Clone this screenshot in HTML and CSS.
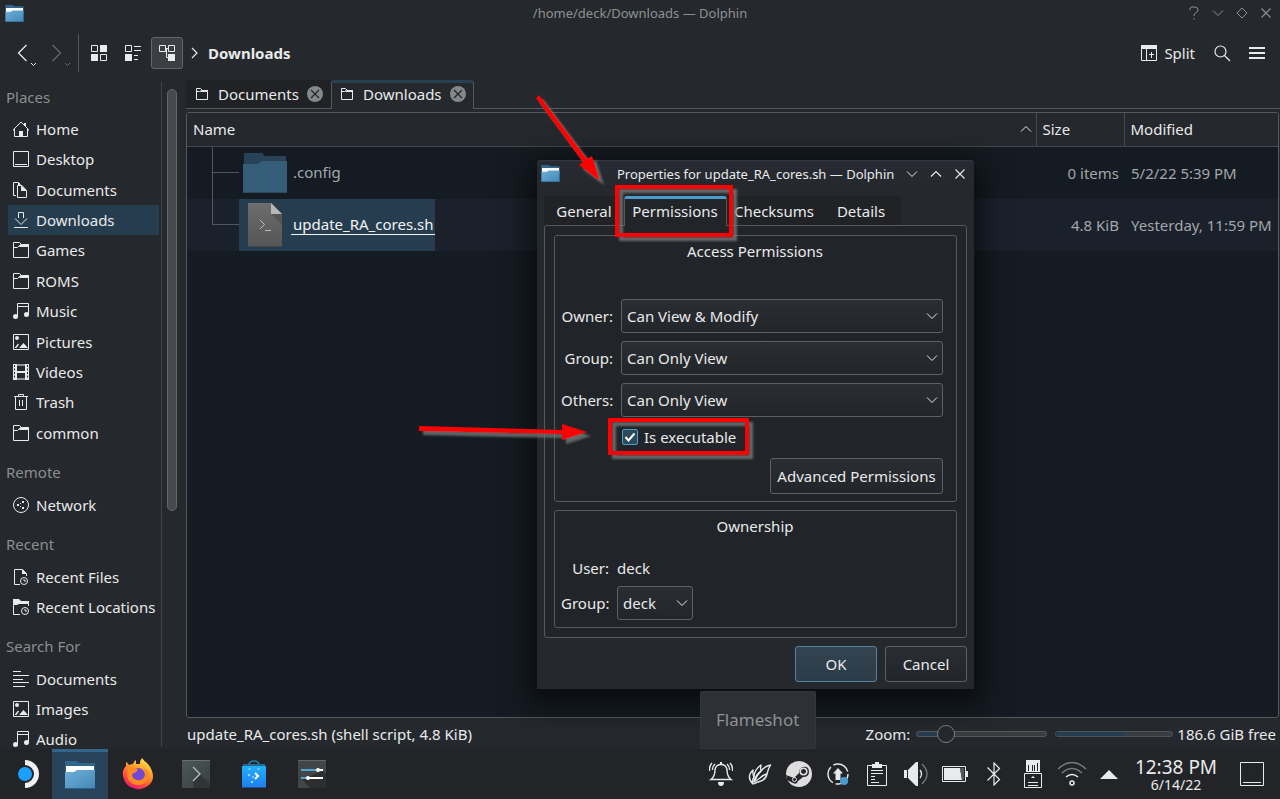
FILE: index.html
```html
<!DOCTYPE html>
<html lang="en">
<head>
<meta charset="utf-8">
<title>/home/deck/Downloads — Dolphin</title>
<link rel="stylesheet" href="styles.css">
</head>
<body>
<svg class="defs" aria-hidden="true">
  <defs>
    <linearGradient id="blueFolder" x1="0" y1="0" x2="1" y2="1"><stop offset="0" stop-color="#6fb0db"/><stop offset="1" stop-color="#4187b5"/></linearGradient>
    <linearGradient id="fox" x1="0.8" y1="0" x2="0.3" y2="1"><stop offset="0" stop-color="#fff04a"/><stop offset=".4" stop-color="#ff9a2a"/><stop offset=".75" stop-color="#ff4a3f"/><stop offset="1" stop-color="#e5157a"/></linearGradient>
    <linearGradient id="bag" x1="0" y1="0" x2="0" y2="1"><stop offset="0" stop-color="#22b0fa"/><stop offset="1" stop-color="#1d7df0"/></linearGradient>
    <linearGradient id="script" x1="0" y1="0" x2="0" y2="1"><stop offset="0" stop-color="#6d6d6d"/><stop offset="1" stop-color="#555"/></linearGradient>
    <linearGradient id="term" x1="0" y1="0" x2="1" y2="1"><stop offset="0" stop-color="#4c5857"/><stop offset="1" stop-color="#3a3f42"/></linearGradient>
    <filter id="drop" x="-20%" y="-20%" width="150%" height="150%"><feDropShadow dx="4" dy="4" stdDeviation="1" flood-color="#777" flood-opacity=".8"/></filter>
  </defs>
  <symbol id="i-home" viewBox="0 0 16 16"><path d="M.5 9.500v-1L8 1l7.500 7.500v1M1.500 8v7.500h13V8" fill="none" stroke="currentColor"/><path d="M6 10h4v6H6zM11 2h2v3h-2z" fill="currentColor"/></symbol>
  <symbol id="i-desktop" viewBox="0 0 16 16"><path d="M.5.5h15v15H.5zM2 13.500h12" fill="none" stroke="currentColor"/></symbol>
  <symbol id="i-docs" viewBox="0 0 16 16"><path d="M3 13.500H.5V.5h5L7 2M4.500 3.500h4.500l4.500 5v7h-9z" fill="none" stroke="currentColor"/><path d="M8 3l6 6H8zM5 0l4 4H5z" fill="currentColor"/></symbol>
  <symbol id="i-down" viewBox="0 0 16 16"><path d="M5.500 6V.5h5V6M2 6.500l6 6 6-6M1 15.500h14" fill="none" stroke="currentColor"/></symbol>
  <symbol id="i-folder" viewBox="0 0 16 16"><path d="M.5 15.500V.5h6l2 2h7v13zM.5 5.500h4l3-3" fill="none" stroke="currentColor"/><path d="M8 2h8v3H6z" fill="currentColor"/></symbol>
  <symbol id="i-folder-s" viewBox="0 0 12 12"><path d="M.5 11.500V.5h4l2 2h5v9zM.5 3.500h3l2-1" fill="none" stroke="currentColor"/><path d="M6 2h6v2H4z" fill="currentColor"/></symbol>
  <symbol id="i-music" viewBox="0 0 16 16"><path d="M4.500 13.500V.5h11v11M5 3.500h10" fill="none" stroke="currentColor"/><circle cx="2.500" cy="13.500" r="2.500" fill="currentColor"/><circle cx="13.500" cy="11.500" r="2.500" fill="currentColor"/></symbol>
  <symbol id="i-image" viewBox="0 0 16 16"><path d="M.5.5h15v15H.5z" fill="none" stroke="currentColor"/><circle cx="4" cy="4" r="2" fill="currentColor"/><path d="M6 14l4.500-5 4.500 5zM1.500 14l3.500-4.500 1 1L3.500 14z" fill="currentColor"/></symbol>
  <symbol id="i-video" viewBox="0 0 16 16"><path d="M0 0h4v16H0zM12 0h4v16h-4zM4 7h8v2H4z" fill="currentColor"/><path d="M4 0h8v2H4zM4 14h8v2H4z" fill="currentColor" opacity=".55"/><path d="M1.500 1v14M14.500 1v14" stroke="#25282c" stroke-dasharray="2 1.500"/></symbol>
  <symbol id="i-trash" viewBox="0 0 16 16"><path d="M1 2.500h14M5.500 2V.5h5V2M2.500 3v12.500h11V3M6.500 6v6M9.500 6v6" fill="none" stroke="currentColor"/></symbol>
  <symbol id="i-net" viewBox="0 0 16 16"><circle cx="8" cy="8" r="7.500" fill="none" stroke="currentColor"/><path d="M4 7h2v2H4zM9 4h2v2H9zM9 10h2v2H9zM7 6h1v1H7zM7 9h1v1H7z" fill="currentColor"/></symbol>
  <symbol id="i-rfile" viewBox="0 0 16 16"><path d="M7 15.500H1.500V.5h8l4 4V7" fill="none" stroke="currentColor"/><path d="M9 0l5 5H9z" fill="currentColor"/><circle cx="11" cy="12" r="3.500" fill="none" stroke="currentColor"/><path d="M11 10v2h2" fill="none" stroke="currentColor"/></symbol>
  <symbol id="i-rloc" viewBox="0 0 16 16"><path d="M7 15.500H.5V4M15.500 7V4" fill="none" stroke="currentColor"/><path d="M0 0h6l2 2h8v3H6L4 6H0z" fill="currentColor"/><circle cx="12" cy="12" r="3.500" fill="none" stroke="currentColor"/><path d="M12 10v2h2" fill="none" stroke="currentColor"/></symbol>
  <symbol id="i-lines" viewBox="0 0 16 16"><path d="M0 .5h8M0 4.500h16M0 8.500h10M0 11.500h16M0 15.500h12" stroke="currentColor"/></symbol>
  <symbol id="i-close" viewBox="0 0 16 16"><circle cx="8" cy="8" r="8" fill="#85878a"/><path d="M4 4l8 8M12 4l-8 8" stroke="#232529" stroke-width="1.200"/></symbol>
  <symbol id="i-chev" viewBox="0 0 12 8"><path d="M1 1.500l5 5 5-5" fill="none" stroke="currentColor"/></symbol>
  <symbol id="i-x" viewBox="0 0 12 12"><path d="M1.500 1.500l9 9M10.500 1.500l-9 9" stroke="currentColor" stroke-width="1.100"/></symbol>
  <symbol id="i-bfolder" viewBox="0 0 30 28"><path d="M0 0h12l3 2h15v12H0z" fill="#30668a"/><path d="M1 5h28v8H1z" fill="#fff"/><path d="M0 11h9l3-2h18v19H0z" fill="url(#blueFolder)"/><path d="M0 27h30v1H0z" fill="#2b6288"/></symbol>
</svg>

<div class="desktop">
  <header class="titlebar">
    <svg class="app-icon" width="19" height="17"><use href="#i-bfolder"/></svg>
    <h1 class="window-title">/home/deck/Downloads — Dolphin</h1>
    <div class="window-buttons">
      <button type="button" aria-label="Help"><svg width="12" height="14" viewBox="0 0 12 14"><path d="M2 4V3q0-2 2-2h3q3 0 3 3 0 2-2.500 3Q6 7.500 6 10M6 12v1.500" fill="none" stroke="currentColor"/></svg></button>
      <button type="button" aria-label="Minimize"><svg width="12" height="8"><use href="#i-chev"/></svg></button>
      <button type="button" aria-label="Maximize"><svg width="12" height="12" viewBox="0 0 12 12"><path d="M6 1l5 5-5 5-5-5z" fill="none" stroke="currentColor"/></svg></button>
      <button type="button" aria-label="Close"><svg width="12" height="12"><use href="#i-x"/></svg></button>
    </div>
  </header>

  <nav class="toolbar" aria-label="Main toolbar">
    <button type="button" class="nav-button" aria-label="Back"><svg width="22" height="24" viewBox="0 0 22 24"><path d="M10.500 2l-8 8 8 8" fill="none" stroke="currentColor" stroke-width="1.300"/><path d="M15 20l2.500 2.500L20 20" fill="none" stroke="currentColor"/></svg></button>
    <button type="button" class="nav-button dim" aria-label="Forward"><svg width="22" height="24" viewBox="0 0 22 24"><path d="M2.500 2l8 8-8 8" fill="none" stroke="currentColor" stroke-width="1.300"/><path d="M15 20l2.500 2.500L20 20" fill="none" stroke="currentColor"/></svg></button>
    <span class="separator"></span>
    <button type="button" class="tool" aria-label="Icons"><svg width="16" height="16" viewBox="0 0 16 16"><path d="M.5.5h6v6h-6zM9.500 9.500h6v6h-6z" fill="none" stroke="currentColor"/><path d="M9 0h7v7H9zM0 9h7v7H0z" fill="currentColor"/></svg></button>
    <button type="button" class="tool" aria-label="Compact"><svg width="16" height="16" viewBox="0 0 16 16"><path d="M.5.5h6v6h-6zM9 1.500h7M9 5.500h7M9 10.500h4M9 14.500h4" fill="none" stroke="currentColor"/><path d="M0 9h7v7H0z" fill="currentColor"/></svg></button>
    <button type="button" class="tool checked" aria-label="Details"><svg width="16" height="16" viewBox="0 0 16 16"><path d="M.5.5h6v6h-6zM9.500.5h6v6h-6zM6.500 3.500h3M7.500 4v8.500H10" fill="none" stroke="currentColor"/><path d="M9 9h7v7H9z" fill="currentColor"/></svg></button>
    <svg class="crumb-arrow" width="8" height="12" viewBox="0 0 8 12"><path d="M1 1l5 5-5 5" fill="none" stroke="currentColor" stroke-width="1.200"/></svg>
    <strong class="crumb">Downloads</strong>
    <div class="toolbar-right">
      <button type="button" class="split"><svg width="16" height="16" viewBox="0 0 16 16"><path d="M.5.5h15v15H.5zM5.500 3v13M10.500 7v6M8 9.500h5" fill="none" stroke="currentColor"/><path d="M0 0h16v4H0z" fill="currentColor"/></svg>Split</button>
      <button type="button" aria-label="Search"><svg width="18" height="18" viewBox="0 0 18 18"><circle cx="7.500" cy="7.500" r="5.500" fill="none" stroke="currentColor" stroke-width="1.200"/><path d="M11.500 11.500L17 17" stroke="currentColor" stroke-width="1.200"/></svg></button>
      <button type="button" aria-label="Menu"><svg width="16" height="12" viewBox="0 0 16 12"><path d="M0 0h16v2H0zM0 5h16v2H0zM0 10h16v2H0z" fill="currentColor"/></svg></button>
    </div>
  </nav>

  <div class="workspace">
    <aside class="places">
      <h2>Places</h2>
      <ul class="places-main">
        <li><a href="#"><svg><use href="#i-home"/></svg>Home</a></li>
        <li><a href="#"><svg><use href="#i-desktop"/></svg>Desktop</a></li>
        <li><a href="#"><svg><use href="#i-docs"/></svg>Documents</a></li>
        <li><a href="#" class="current"><svg><use href="#i-down"/></svg>Downloads</a></li>
        <li><a href="#"><svg><use href="#i-folder"/></svg>Games</a></li>
        <li><a href="#"><svg><use href="#i-folder"/></svg>ROMS</a></li>
        <li><a href="#"><svg><use href="#i-music"/></svg>Music</a></li>
        <li><a href="#"><svg><use href="#i-image"/></svg>Pictures</a></li>
        <li><a href="#"><svg><use href="#i-video"/></svg>Videos</a></li>
        <li><a href="#"><svg><use href="#i-trash"/></svg>Trash</a></li>
        <li><a href="#"><svg><use href="#i-folder"/></svg>common</a></li>
      </ul>
      <h2>Remote</h2>
      <ul><li><a href="#"><svg><use href="#i-net"/></svg>Network</a></li></ul>
      <h2>Recent</h2>
      <ul>
        <li><a href="#"><svg><use href="#i-rfile"/></svg>Recent Files</a></li>
        <li><a href="#"><svg><use href="#i-rloc"/></svg>Recent Locations</a></li>
      </ul>
      <h2>Search For</h2>
      <ul>
        <li><a href="#"><svg><use href="#i-lines"/></svg>Documents</a></li>
        <li><a href="#"><svg><use href="#i-image"/></svg>Images</a></li>
        <li><a href="#"><svg><use href="#i-music"/></svg>Audio</a></li>
      </ul>
    </aside>
    <div class="scroll-track"><div class="scroll-thumb"></div></div>

    <main class="content">
      <div class="tabs">
        <div class="tab"><svg width="12" height="12"><use href="#i-folder-s"/></svg><span>Documents</span><button type="button" aria-label="Close Documents"><svg width="16" height="16"><use href="#i-close"/></svg></button></div>
        <div class="tab active"><svg width="12" height="12"><use href="#i-folder-s"/></svg><span>Downloads</span><button type="button" aria-label="Close Downloads"><svg width="16" height="16"><use href="#i-close"/></svg></button></div>
      </div>
      <div class="view">
        <table class="files">
          <thead>
            <tr><th><div class="sort">Name<svg width="12" height="8" viewBox="0 0 12 8"><path d="M1 6.500l5-5 5 5" fill="none" stroke="currentColor"/></svg></div></th><th class="size">Size</th><th class="modified">Modified</th></tr>
          </thead>
          <tbody>
            <tr>
              <td><div class="entry"><svg class="branch" width="52" height="52" viewBox="0 0 52 52"><path d="M25.500 0v52M26 25.500h26" stroke="#53575b"/></svg><div class="file"><svg width="44" height="40" viewBox="0 0 44 40"><path d="M1 0h18l3 3h21v10H1z" fill="#284358"/><path d="M0 11h15l4-3h25v32H0z" fill="#365d78"/><path d="M0 39h44v1H0z" fill="#2b4a60"/></svg><span>.config</span></div></div></td>
              <td class="size">0 items</td><td>5/2/22 5:39 PM</td>
            </tr>
            <tr class="alt">
              <td><div class="entry"><svg class="branch" width="52" height="52" viewBox="0 0 52 52"><path d="M25.500 0v26M25 25.500h27" fill="none" stroke="#53575b"/></svg><div class="file selected"><svg width="44" height="44" viewBox="0 0 44 44"><path d="M5 0h23l11 11v33H5z" fill="url(#script)"/><path d="M28 11h11v11z" fill="#555"/><path d="M28 0l11 11H28z" fill="#b7b7b7"/><path d="M5 43h34v1H5z" fill="#444"/><path d="M17 17l4.500 4.500L17 26M22 27.500h6" fill="none" stroke="#bbb"/></svg><span>update_RA_cores.sh</span></div></div></td>
              <td class="size">4.8 KiB</td><td>Yesterday, 11:59 PM</td>
            </tr>
          </tbody>
        </table>
      </div>
      <footer class="status">
        <span>update_RA_cores.sh (shell script, 4.8 KiB)</span>
        <label class="zoom-label" for="zoom">Zoom:</label>
        <input id="zoom" class="zoom" type="range" min="0" max="100" value="18">
        <div class="capacity"><div class="used" style="width:59%"></div></div>
        <span>186.6 GiB free</span>
      </footer>
    </main>
  </div>

  <footer class="taskbar">
    <button type="button" class="launcher" aria-label="Launcher"><svg width="24" height="28" viewBox="0 0 24 28"><path d="M8 0a14 14 0 0 1 0 28v-5a9 9 0 0 0 0-18z" fill="#f1f1f2"/><circle cx="8" cy="14" r="7" fill="#1a9fff"/></svg></button>
    <div class="tasks">
      <button type="button" class="task running" aria-label="Dolphin"><svg width="30" height="28"><use href="#i-bfolder"/></svg></button>
      <button type="button" class="task" aria-label="Firefox"><svg width="32" height="32" viewBox="0 0 32 32"><path d="M20 0q2 3 5 5 4 4 5 8 3 9-3 14-6 5-13 4Q3 29 1 18 0 12 4 8V4q2 1 3 3 2-1 4-1 1-3 3-4v4h4q0-4 2-6z" fill="url(#fox)"/><circle cx="16" cy="17" r="7" fill="#7447d4"/><path d="M6 10q3-2 6 0l4 1q-1 3-4 4l-2 1q0 5 5 6 6 1 8-4 1-5-3-9 7 3 7 9-1 8-10 9Q7 27 5 18z" fill="#ff8a20"/></svg></button>
      <button type="button" class="task" aria-label="Konsole"><svg width="28" height="28" viewBox="0 0 28 28"><path d="M0 0h28v28H0z" fill="url(#term)"/><path d="M18 14l10 10v4H12l-1-7z" fill="#303436"/><path d="M0 .5h28" stroke="#66716e"/><path d="M11 7l7 7-7 7" fill="none" stroke="#b9c1bd" stroke-width="1.300"/></svg></button>
      <button type="button" class="task" aria-label="Discover"><svg width="26" height="28" viewBox="0 0 26 28"><path d="M8 8V5q0-4 5-4t5 4v3" fill="none" stroke="#247eae" stroke-width="1.500"/><path d="M2 4h22v4H2z" fill="#226a91"/><path d="M1 6h24v21.500H1z" fill="url(#bag)"/><path d="M14 13l3 3-3 3" fill="none" stroke="#fff" stroke-width="2"/><g fill="#8fd4ff"><circle cx="8" cy="15" r="1.300"/><circle cx="11" cy="22" r="1.300"/><circle cx="8.500" cy="9" r="1"/><circle cx="17.500" cy="9" r="1"/><circle cx="12" cy="17" r="1"/></g></svg></button>
      <button type="button" class="task" aria-label="System Settings"><svg width="28" height="28" viewBox="0 0 28 28"><path d="M0 0h28v28H0z" fill="#434547"/><path d="M4 19l21-8 3 3v14H12z" fill="#2c2e30"/><path d="M0 .5h28" stroke="#626466"/><path d="M3 10h17M3 18h7" stroke="#53a5d7" stroke-width="2"/><path d="M20 10h5M10 18h15" stroke="#fff" stroke-width="2"/><circle cx="20" cy="10" r="2" fill="#fff"/><circle cx="10" cy="18" r="2" fill="#fff"/></svg></button>
    </div>
    <div class="tray">
      <button type="button" aria-label="Notifications"><svg width="24" height="24" viewBox="0 0 24 24"><path d="M2 17.500q4-3 4-10Q7 2.500 12 2.500t6 5q0 7 4 10z" fill="none" stroke="currentColor" stroke-width="1.400"/><path d="M9 20h6q0 4-3 4t-3-4zM11 0h2v3h-2z" fill="currentColor"/><path d="M3 1Q0 4 .5 9M6 2Q3 5 3.500 8M21 1q3 3 2.500 8M18 2q3 3 2.500 6" fill="none" stroke="currentColor" stroke-width="1.300"/></svg></button>
      <button type="button" aria-label="Flameshot"><svg width="24" height="24" viewBox="0 0 24 24"><g fill="none" stroke="currentColor" stroke-width="1.400" stroke-linejoin="round"><path d="M5 22Q0 17 2 12q1-2 3-4-.5 4 1 7Q4 18 5 22z"/><path d="M6 15q0-7 7-12-1 4 0 6-4 4-7 11"/><path d="M13 9q4-5 9.500-6Q20 7 19 12q-4 1-7 4l-6 4q1-7 7-11z"/><path d="M19 12q-1 5-6 7-4 1-7.500 3"/></g></svg></button>
      <button type="button" aria-label="Steam"><svg width="26" height="26" viewBox="0 0 26 26"><circle cx="13" cy="13" r="13" fill="#dedede"/><path d="M0 14l8 3 5-5q0-5 4-6 6-1 6 5 0 5-6 5l-5 4q-1 4-5 2l-6-3z" fill="#25272a"/><circle cx="17.500" cy="10.500" r="3.300" fill="none" stroke="#dedede" stroke-width="1.600"/><circle cx="8.500" cy="18.500" r="2" fill="none" stroke="#dedede"/></svg></button>
      <button type="button" aria-label="Updates"><svg width="24" height="24" viewBox="0 0 24 24"><circle cx="12" cy="12" r="10" fill="none" stroke="currentColor" stroke-width="1.400" stroke-dasharray="18 3"/><path d="M12 6l5 5.500h-2.500V18h-5v-6.500H7z" fill="currentColor"/><circle cx="18" cy="19" r="4" fill="#4a9bd0"/></svg></button>
      <button type="button" aria-label="Clipboard"><svg width="20" height="24" viewBox="0 0 20 24"><path d="M.5 3.500h19v20H.5zM4 8.500h12M4 11.500h12M4 14.500h4M4 17.500h4M4 20.500h8" fill="none" stroke="currentColor"/><path d="M5 2h3V0h4v2h3v4H5z" fill="currentColor"/></svg></button>
      <button type="button" aria-label="Volume"><svg width="24" height="24" viewBox="0 0 24 24"><path d="M0 8h3v8H0zM4 8l8-8h2v24h-2l-8-8z" fill="currentColor"/><path d="M16 8q3 4 0 8" fill="none" stroke="currentColor" stroke-width="1.300"/><path d="M18 2q10 10 0 20" fill="none" stroke="#77797b" stroke-width="1.300"/></svg></button>
      <button type="button" aria-label="Battery"><svg width="26" height="16" viewBox="0 0 26 16"><path d="M.5.5h23v15H.5z" fill="none" stroke="currentColor"/><path d="M2 2h16l2 12H2zM24 5h2v6h-2z" fill="currentColor"/><path d="M18 2h4v12h-2z" fill="#55585a"/></svg></button>
      <button type="button" aria-label="Bluetooth"><svg width="14" height="24" viewBox="0 0 14 24"><path d="M.5 5.500l12 12L7 23V1l5.500 5.500-12 12" fill="none" stroke="currentColor" stroke-width="1.200"/></svg></button>
      <button type="button" aria-label="Removable devices"><svg width="18" height="28" viewBox="0 0 18 28"><path d="M2 0h14v12H2z" fill="currentColor"/><path d="M4.500 5v6M8.500 5v6M10.500 5v6M13.500 3v8" stroke="#232428"/><path d="M.5 13.500h17v14H.5zM4 22.500h10M4 25.500h10" fill="none" stroke="currentColor"/><path d="M9 16l2 2H7z" fill="currentColor"/></svg></button>
      <button type="button" aria-label="Network"><svg width="30" height="26" viewBox="0 0 30 26"><g fill="none" stroke-width="1.500"><path d="M1 8q14-13 28 0M5 12q10-9 20 0" stroke="#77797b"/><path d="M9 16q6-5 12 0" stroke="currentColor"/><circle cx="15" cy="22" r="2" stroke="currentColor"/></g></svg></button>
      <button type="button" class="more" aria-label="Show hidden icons"><svg width="18" height="9" viewBox="0 0 18 9"><path d="M9 0l9 9H0z" fill="currentColor"/></svg></button>
      <div class="clock"><time class="time">12:38 PM</time><time class="date">6/14/22</time></div>
      <button type="button" class="peek" aria-label="Show desktop"><svg width="24" height="24" viewBox="0 0 24 24"><path d="M.5.5h23v23H.5zM3 20.500h18" fill="none" stroke="currentColor"/></svg></button>
    </div>
  </footer>

  <section class="dialog" role="dialog" aria-labelledby="dialog-title">
    <header class="dialog-title">
      <svg class="app-icon" width="19" height="17"><use href="#i-bfolder"/></svg>
      <h2 id="dialog-title">Properties for update_RA_cores.sh — Dolphin</h2>
      <div class="window-buttons">
        <button type="button" aria-label="Minimize dialog"><svg width="12" height="8"><use href="#i-chev"/></svg></button>
        <button type="button" aria-label="Maximize dialog"><svg width="12" height="8" viewBox="0 0 12 8"><path d="M1 6.500l5-5 5 5" fill="none" stroke="currentColor" stroke-width="1.200"/></svg></button>
        <button type="button" aria-label="Close dialog"><svg width="12" height="12"><use href="#i-x"/></svg></button>
      </div>
    </header>
    <div class="dialog-tabs" role="tablist">
      <button type="button" role="tab">General</button>
      <button type="button" role="tab" class="active" aria-selected="true">Permissions</button>
      <button type="button" role="tab">Checksums</button>
      <button type="button" role="tab">Details</button>
    </div>
    <div class="page">
      <fieldset class="group access">
        <h3>Access Permissions</h3>
        <div class="form">
          <label for="owner">Owner:</label>
          <div class="combo"><select id="owner"><option>Can View &amp; Modify</option></select><svg width="12" height="8"><use href="#i-chev"/></svg></div>
          <label for="group">Group:</label>
          <div class="combo"><select id="group"><option>Can Only View</option></select><svg width="12" height="8"><use href="#i-chev"/></svg></div>
          <label for="others">Others:</label>
          <div class="combo"><select id="others"><option>Can Only View</option></select><svg width="12" height="8"><use href="#i-chev"/></svg></div>
        </div>
        <div class="check">
          <span class="box"><input id="exec" type="checkbox" checked><svg width="16" height="16" viewBox="0 0 16 16"><path d="M3.500 8l3 3.500 6-7" fill="none" stroke="#fff" stroke-width="2"/></svg></span>
          <label for="exec">Is executable</label>
        </div>
        <button type="button" class="btn advanced">Advanced Permissions</button>
      </fieldset>
      <fieldset class="group ownership">
        <h3>Ownership</h3>
        <div class="owner-form">
          <span class="name">User:</span><span>deck</span>
          <label class="name" for="ugroup">Group:</label>
          <div class="combo small"><select id="ugroup"><option>deck</option></select><svg width="12" height="8"><use href="#i-chev"/></svg></div>
        </div>
      </fieldset>
    </div>
    <div class="actions"><button type="button" class="btn primary">OK</button><button type="button" class="btn">Cancel</button></div>
  </section>

  <div class="tooltip" role="tooltip">Flameshot</div>

  <svg class="marks" width="1280" height="799" viewBox="0 0 1280 799" aria-hidden="true">
    <g filter="url(#drop)"><path d="M617 187h114v48H617z" fill="none" stroke="#f00" stroke-width="4"/></g>
    <g filter="url(#drop)"><path d="M610 420h137v33H610z" fill="none" stroke="#f00" stroke-width="4"/></g>
    <g filter="url(#drop)" fill="#f00"><path d="M536 98l3-3 48 64 5-3 8 25-21-16 4-3z"/></g>
    <g filter="url(#drop)" fill="#f00"><path d="M419 426l143 4v-6l25 8-25 8v-6l-143-3z"/></g>
  </svg>
</div>
</body>
</html>
```
FILE: styles.css
```css
* { box-sizing: border-box; }

body {
  margin: 0;
  background: #25282c;
  color: #e9eaeb;
  font: 15px/20px "Noto Sans", sans-serif;
}

h1, h2, h3, ul, fieldset { margin: 0; padding: 0; border: 0; font-weight: 400; }
svg { display: block; flex: none; }
button, select { font: inherit; color: inherit; }
button { padding: 0; border: 0; background: none; }

.defs { position: absolute; width: 0; height: 0; }

.desktop {
  position: relative;
  display: flex;
  flex-direction: column;
  height: 100vh;
  overflow: hidden;
}

/* Window title bar and toolbar */
.titlebar {
  display: grid;
  grid-template-columns: 1fr auto 1fr;
  align-items: center;
  height: 27px;
  padding: 0 5px 1px;
  color: #8d9193;
}
.window-title { font-size: 13px; }
.window-buttons { display: flex; justify-content: flex-end; gap: 12px; margin-right: 3px; }
.window-buttons button { display: grid; place-items: center; width: 12px; height: 16px; }

.toolbar {
  display: flex;
  align-items: center;
  height: 53px;
  padding: 0 15px 2px 16px;
}
.nav-button { width: 34px; height: 28px; padding-top: 4px; }
.nav-button.dim { width: 28px; color: #66696c; }
.separator { width: 1px; height: 38px; margin-right: 4px; background: #55585b; }
.tool { display: grid; place-items: center; width: 32px; height: 32px; margin-right: 2px; }
.tool.checked { border: 1px solid #63676a; border-radius: 3px; background: #3b3f43; }
.crumb-arrow { margin: 0 9px 0 6px; }
.crumb { font-weight: 700; }
.toolbar-right { display: flex; align-items: center; gap: 18px; margin-left: auto; }
.split { display: flex; align-items: center; gap: 7px; }

.workspace { display: flex; flex: 1; min-height: 0; }

/* Places panel */
.places {
  width: 162px;
  margin: 2px 0;
  overflow: hidden;
  border-right: 1px solid #404347;
}
.places h2 {
  height: 32px;
  padding: 5px 6px;
  color: #8b8e91;
  font-size: 15px;
}
.places ul + h2 { height: 33px; margin-top: 9px; }
.places ul { display: grid; grid-auto-rows: 30px; padding: 0 2px 0 8px; list-style: none; }
.places .places-main { height: 334px; grid-auto-rows: 1fr; }
.places a {
  display: flex;
  align-items: center;
  gap: 7px;
  height: 30px;
  padding-left: 5px;
  color: inherit;
  text-decoration: none;
  white-space: nowrap;
}
.places a svg { width: 16px; height: 16px; }
.places a.current { background: #263d4f; }
.scroll-track { width: 24px; padding: 9px 9px 0 5px; }
.scroll-thumb { height: 422px; border: 1px solid #65686b; border-radius: 5px; background: #48494d; }

/* Folder view */
.content { display: flex; flex: 1; flex-direction: column; min-width: 0; }
.tabs { display: flex; height: 29px; }
.tabs::after { content: ""; flex: 1; border-bottom: 1px solid #55595c; }
.tab {
  display: flex;
  align-items: center;
  width: 145px;
  padding: 0 8px 1px 10px;
  border-bottom: 1px solid #55595c;
  background: #202226;
}
.tab span { margin-left: 10px; }
.tab button { margin-left: auto; }
.tab.active {
  width: 143px;
  padding: 0 7px 4px 9px;
  border: 1px solid #55595c;
  border-top: 3px solid #294052;
  border-bottom: 0;
  border-radius: 3px 3px 0 0;
  background: #25282c;
}
.view {
  flex: 1;
  margin: 3px 1px 0 0;
  overflow: hidden;
  border: 1px solid #55595c;
  border-radius: 3px;
  background: #151b22;
}
.files { width: 100%; border-collapse: collapse; table-layout: fixed; color: #a3a6a9; }
.files th {
  height: 33px;
  padding: 0 6px;
  border-bottom: 1px solid #46494d;
  border-left: 1px solid #46494d;
  background: #25282c;
  color: #e9eaeb;
  font-weight: 400;
  text-align: left;
}
.files th:first-child { padding-right: 4px; border-left: 0; }
.files th.size { width: 88px; }
.files th.modified { width: 154px; }
.files td { height: 52px; padding: 0 5px 0 7px; white-space: nowrap; }
.files td:first-child { padding: 0; }
.files td.size { text-align: right; }
.files .alt { background: #1a212b; }
.sort { display: flex; align-items: center; justify-content: space-between; }
.entry { display: flex; height: 52px; }
.file { display: flex; align-items: center; gap: 4px; padding-left: 4px; }
.file span { padding: 0 1px 0 2px; border-bottom: 1px solid transparent; }
.file.selected { background: #263d4f; color: #f2f3f3; }
.file.selected span { border-color: #f2f3f3; }

.status { display: flex; align-items: center; height: 31px; padding: 1px 4px 0 1px; }
.zoom-label { margin-left: auto; }
.zoom { width: 131px; height: 20px; margin: 0 8px 0 6px; appearance: none; background: none; }
.zoom::-webkit-slider-runnable-track {
  height: 6px;
  border: 1px solid #55595c;
  border-radius: 3px;
  background: linear-gradient(90deg, #263d4f 18%, #393c3f 18%);
}
.zoom::-webkit-slider-thumb {
  width: 18px;
  height: 18px;
  margin-top: -7px;
  appearance: none;
  border: 1px solid #7b7e80;
  border-radius: 50%;
  background: #25282c;
}
.capacity { width: 118px; height: 6px; margin-right: 4px; border: 1px solid #4a5359; border-radius: 3px; background: #3a3d40; }
.used { height: 100%; background: #263d4f; }

/* Bottom panel */
.taskbar { display: flex; justify-content: space-between; height: 50px; background: #232428; }
.launcher { display: grid; place-items: center; width: 52px; padding-left: 6px; }
.tasks { display: flex; gap: 2px; margin-right: auto; }
.task { display: grid; place-items: center; width: 56px; }
.task.running { padding-bottom: 2px; border-top: 3px solid #32658a; background: #29445a; }
.tray { display: flex; align-items: center; padding-right: 2px; }
.tray button { display: grid; place-items: center; width: 39px; height: 50px; }
.tray .more { width: 35px; }
.tray .peek { width: 52px; }
.clock { display: flex; flex-direction: column; align-items: center; width: 100px; padding-top: 1px; }
.time { font-size: 19px; line-height: 20px; }
.date { font-size: 14px; line-height: 16px; }

/* Properties dialog */
.dialog {
  position: absolute;
  top: 160px;
  left: 537px;
  width: 437px;
  padding: 0 7px 7px;
  border-top: 1px solid #34373b;
  border-radius: 3px 3px 0 0;
  background: #25282c;
  box-shadow: 0 8px 30px 8px rgba(0, 0, 0, .55);
}
.dialog-title {
  display: grid;
  grid-template-columns: 73px auto 1fr;
  align-items: center;
  height: 27px;
  margin: 0 -7px;
  padding: 0 5px 2px 4px;
  border-radius: 3px 3px 0 0;
  background: linear-gradient(#282a34, #25282c);
}
.dialog-title h2 { padding-left: 3px; font-size: 13px; white-space: nowrap; }
.dialog-tabs { display: flex; margin-top: 8px; }
.dialog-tabs button { height: 29px; padding-top: 1px; width: 80px; background: #202226; }
.dialog-tabs button:nth-child(3) { width: 94px; }
.dialog-tabs .active {
  width: 103px;
  height: 30px;
  margin-bottom: -1px;
  padding: 0 1px 4px 0;
  border: 1px solid #55595c;
  border-top: 3px solid #4c9bce;
  border-bottom: 0;
  border-radius: 3px 3px 0 0;
  background: #212428;
  z-index: 1;
}
.page { padding: 9px; border: 1px solid #55595c; border-radius: 3px; background: #212428; }
.group { min-width: 0; padding: 5px 13px 7px 6px; border: 1px solid #55595c; border-radius: 3px; }
.group h3 { margin-right: -6px; font-size: 15px; text-align: center; }
.ownership { margin-top: 8px; }
.form {
  display: grid;
  grid-template-columns: 52px 1fr;
  gap: 8px;
  align-items: center;
  margin-top: 38px;
}
.form label { text-align: right; }
.combo { display: grid; align-items: center; }
.combo select, .combo svg { grid-area: 1 / 1; }
.combo svg { justify-self: end; margin-right: 5px; pointer-events: none; }
.combo select {
  width: 100%;
  height: 34px;
  padding: 0 5px;
  appearance: none;
  border: 1px solid #5d6164;
  border-radius: 3px;
  background: linear-gradient(#2a2d31, #222529);
}
.check { display: flex; align-items: center; gap: 6px; height: 40px; padding-left: 61px; }
.box { display: grid; }
.box input, .box svg { grid-area: 1 / 1; }
.box svg { pointer-events: none; }
.box input { width: 16px; height: 16px; margin: 0; appearance: none; border: 1px solid #4c9bce; border-radius: 2px; background: #2d4a5d; }
.btn {
  width: 82px;
  height: 36px;
  border: 1px solid #5d6164;
  border-radius: 3px;
  background: linear-gradient(#2a2d31, #222529);
}
.btn.primary { border-color: #55829e; background: linear-gradient(#344350, #2b3b48); }
.btn.advanced { display: block; width: 173px; margin: 1px 0 0 auto; }
.owner-form {
  display: grid;
  grid-template-columns: 48px 76px;
  grid-template-rows: 20px 34px;
  gap: 8px;
  align-items: center;
  margin-top: 22px;
}
.owner-form .name { text-align: right; }
.actions { display: flex; justify-content: flex-end; gap: 8px; margin-top: 8px; }

.tooltip {
  position: absolute;
  top: 691px;
  left: 700px;
  padding: 18px 16px 18px 15px;
  border: 1px solid #34373a;
  border-radius: 2px;
  background: #2d3034;
  color: #8f9194;
  font-size: 17px;
}
.marks { position: absolute; top: 0; left: 0; pointer-events: none; }
```
